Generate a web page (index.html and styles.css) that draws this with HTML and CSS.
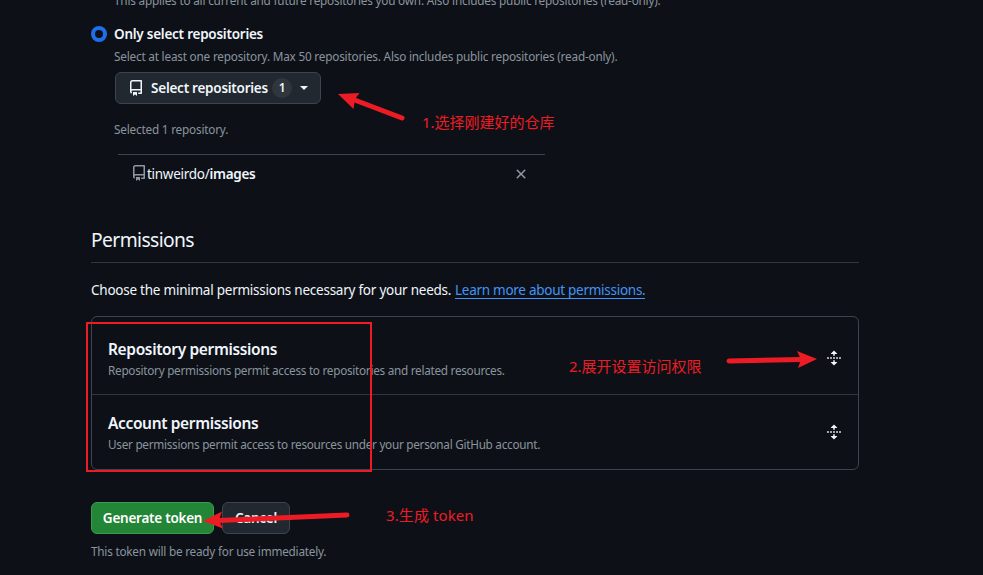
FILE: index.html
```html
<!DOCTYPE html>
<html lang="en">
<head>
<meta charset="utf-8">
<title>New fine-grained personal access token</title>
<link rel="stylesheet" href="styles.css">
</head>
<body>
<svg class="defs" width="0" height="0" aria-hidden="true">
  <symbol id="repo" viewBox="0 0 16 16"><path d="M2 2.5A2.5 2.5 0 0 1 4.5 0h8.75a.75.75 0 0 1 .75.75v12.5a.75.75 0 0 1-.75.75h-2.5a.75.75 0 0 1 0-1.5h1.75v-2h-8a1 1 0 0 0-.714 1.7.75.75 0 1 1-1.072 1.05A2.495 2.495 0 0 1 2 11.5Zm10.5-1h-8a1 1 0 0 0-1 1v6.708A2.486 2.486 0 0 1 4.5 9h8ZM5 12.25a.25.25 0 0 1 .25-.25h3.5a.25.25 0 0 1 .25.25v3.25a.25.25 0 0 1-.4.2l-1.45-1.087a.249.249 0 0 0-.3 0L5.4 15.7a.25.25 0 0 1-.4-.2Z"/></symbol>
  <symbol id="unfold" viewBox="0 0 16 16"><path d="m8.177.677 2.896 2.896a.25.25 0 0 1-.177.427H8.75v1.25a.75.75 0 0 1-1.5 0V4H5.104a.25.25 0 0 1-.177-.427L7.823.677a.25.25 0 0 1 .354 0ZM7.25 10.75a.75.75 0 0 1 1.5 0V12h2.146a.25.25 0 0 1 .177.427l-2.896 2.896a.25.25 0 0 1-.354 0l-2.896-2.896A.25.25 0 0 1 5.104 12H7.25v-1.25Z"/><path class="dots" d="M1 7h2v2H1zM4 7h2v2H4zM7 7h2v2H7zM10 7h2v2h-2zM13 7h2v2h-2z"/></symbol>
</svg>
<main class="page">
  <section class="access">
    <p class="note all-note">This applies to all current and future repositories you own. Also includes public repositories (read-only).</p>
    <div class="option"><span class="radio"></span><span class="option-label">Only select repositories</span></div>
    <p class="note">Select at least one repository. Max 50 repositories. Also includes public repositories (read-only).</p>
    <button class="btn select-btn"><svg width="16" height="16"><use href="#repo"/></svg><span class="select-label">Select repositories</span><span class="counter">1</span><span class="caret"></span></button>
    <p class="note selected-note">Selected 1 repository.</p>
    <div class="repo-row">
      <svg class="muted" width="16" height="16"><use href="#repo"/></svg><span class="repo-name">tinweirdo/<b>images</b></span>
      <svg class="remove" width="16" height="16" viewBox="0 0 16 16"><path d="M3.72 3.72a.75.75 0 0 1 1.06 0L8 6.94l3.22-3.22a.75.75 0 1 1 1.06 1.06L9.06 8l3.22 3.22a.75.75 0 1 1-1.06 1.06L8 9.06l-3.22 3.22a.75.75 0 0 1-1.06-1.06L6.94 8 3.72 4.78a.75.75 0 0 1 0-1.06Z"/></svg>
    </div>
  </section>
  <h2>Permissions</h2>
  <p class="intro"><span class="intro-text">Choose the minimal permissions necessary for your needs.</span><a>Learn more about permissions.</a></p>
  <div class="box">
    <div class="box-row">
      <div><h3>Repository permissions</h3><p class="note box-note">Repository permissions permit access to repositories and related resources.</p></div>
      <svg width="16" height="16"><use href="#unfold"/></svg>
    </div>
    <div class="box-row">
      <div><h3>Account permissions</h3><p class="note box-note">User permissions permit access to resources under your personal GitHub account.</p></div>
      <svg width="16" height="16"><use href="#unfold"/></svg>
    </div>
  </div>
  <div class="actions"><button class="btn primary">Generate token</button><button class="btn cancel">Cancel</button></div>
  <p class="note final-note">This token will be ready for use immediately.</p>
</main>
<div class="frame"></div>
<svg class="arrows" width="983" height="575" viewBox="0 0 983 575">
  <path class="shaft" d="M352 99 402 118"/><path d="M338 94 359.500 93 355 99 353.500 109Z"/>
  <path class="shaft" d="M729 361 802 359.500"/><path d="M817 359 797 351 801 359.500 798 368Z"/>
  <path class="shaft" d="M218 520.500 347 515"/><path d="M203 521 222 511.500 219 520 223 528.500Z"/>
</svg>
<span class="callout one">1.选择刚建好的仓库</span>
<span class="callout two">2.展开设置访问权限</span>
<span class="callout three">3.生成 token</span>
</body>
</html>
```
FILE: styles.css
```css
* { box-sizing: border-box; }
body {
  margin: 0;
  width: 983px;
  height: 575px;
  overflow: hidden;
  position: relative;
  background: #0d1117;
  color: #f0f6fc;
  font: 13.5px/21px "Noto Sans", "Noto Sans CJK SC", sans-serif;
  letter-spacing: -.24px;
}
.defs { position: absolute; }
svg { fill: currentColor; flex: none; display: block; }
p, h2, h3 { margin: 0; white-space: nowrap; }
.page { margin-left: 91px; width: 768px; display: flow-root; }
.access { padding-left: 23px; }
.note { height: 18px; color: #8b949e; font-size: 11.75px; line-height: 16px; letter-spacing: -.195px; }
.all-note { margin-top: -8px; }
.option { display: flex; align-items: center; gap: 7px; margin: 13px 0 4px -23px; height: 21px; }
.radio { width: 16px; height: 16px; border: 4px solid #1f6feb; border-radius: 50%; }
.option-label { padding-top: 2px; font-weight: 600; }
.btn {
  display: flex;
  align-items: center;
  justify-content: center;
  height: 32px;
  padding: 0;
  border: 1px solid #3d444d;
  border-radius: 6px;
  background: #212830;
  color: #f0f6fc;
  font: 600 13.5px/20px "Noto Sans", sans-serif;
  letter-spacing: -.25px;
  white-space: nowrap;
}
.select-btn { width: 206px; margin: 6px 0 0 1px; padding: 0 12px; justify-content: flex-start; }
.select-label { width: 117px; margin-left: 7px; }
.counter { width: 20px; height: 20px; margin-left: 4px; border-radius: 10px; background: #2f363e; font-size: 12px; text-align: center; }
.caret { margin-left: 8px; border: 4px solid transparent; border-top-color: currentColor; border-bottom: 0; }
.selected-note { margin-top: 17px; }
.repo-row { display: flex; align-items: center; width: 427px; height: 38px; margin: 15px 0 0 4px; padding: 0 16px 0 13px; border-top: 1px solid #3d444d; }
.repo-name { padding-top: 2px; letter-spacing: -.28px; }
.repo-name b { font-weight: 600; }
.muted, .remove { color: #9198a1; }
.muted { margin-bottom: 2px; }
.remove { margin-left: auto; }
h2 { height: 38px; margin-top: 33px; padding-bottom: 8px; font-size: 19.25px; line-height: 30px; font-weight: 400; letter-spacing: -.6px; border-bottom: 1px solid #30363d; }
.intro { display: flex; height: 21px; margin-top: 16px; line-height: 23px; }
.intro-text { width: 364px; }
a { color: #4493f8; height: 20px; border-bottom: 1px solid #4493f8; letter-spacing: -.27px; }
.box { margin-top: 16px; border: 1px solid #3d444d; border-radius: 6px; }
.box-row { display: flex; justify-content: space-between; height: 77px; padding: 20px 16px 0; }
.box-row + .box-row { height: 75px; padding-top: 16px; border-top: 1px solid #30363d; }
.box-row > svg { margin-top: 13px; }
h3 { height: 25px; font-size: 15.5px; line-height: 24px; font-weight: 600; letter-spacing: -.36px; }
.box-note { letter-spacing: -.275px; }
.actions { display: flex; gap: 8px; margin-top: 32px; }
.primary { width: 123px; background: #238636; border-color: #3c9a4c; color: #fff; }
.cancel { width: 68px; }
.final-note { margin-top: 9px; letter-spacing: -.22px; }
.dots { opacity: .65; }
.frame { position: absolute; left: 86px; top: 322px; width: 286px; height: 150px; border: 2px solid #ed1c24; }
.arrows { position: absolute; inset: 0; color: #ed1c24; }
.shaft { stroke: currentColor; stroke-width: 5; stroke-linecap: round; }
.callout { position: absolute; color: #ed1c24; font-size: 15px; line-height: 21px; letter-spacing: 0; white-space: nowrap; }
.one { left: 422px; top: 112px; }
.two { left: 569px; top: 356px; }
.three { left: 386px; top: 505px; letter-spacing: .1px; }
```
